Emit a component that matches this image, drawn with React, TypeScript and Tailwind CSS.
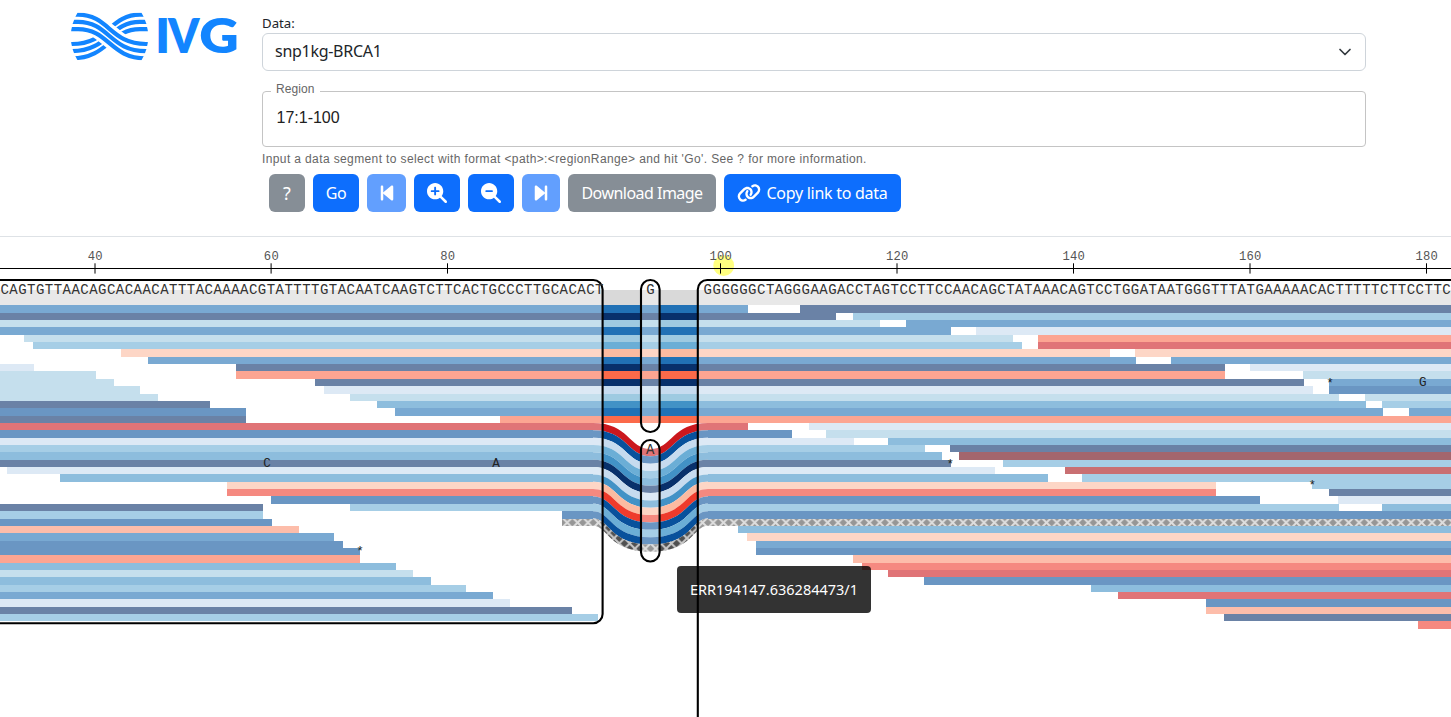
import React from "react";
import {
  FaBackwardStep,
  FaForwardStep,
  FaLink,
  FaMagnifyingGlassMinus,
  FaMagnifyingGlassPlus,
} from "react-icons/fa6";

const COLORS: Record<string, string> = {
  A: "#c6dbef",
  B: "#9ecae1",
  C: "#6baed6",
  D: "#4292c6",
  E: "#2171b5",
  F: "#08519c",
  G: "#08306b",
  h: "#fcbba1",
  i: "#fc9272",
  j: "#fb6a4a",
  k: "#ef3b2c",
  l: "#cb181d",
  m: "#a50f15",
  n: "#67000d",
  x: "url(#plaid)",
};

type Read = [string, number, number];
const END = 1460;

const ROWS: Read[][] = [
  [["E", 0, 748], ["G", 800, END]],
  [["G", 0, 836], ["C", 853, END]],
  [["B", 0, 880], ["E", 906, END]],
  [["E", 0, 951], ["A", 976, END]],
  [["B", 24, 1013], ["j", 1038, END]],
  [["C", 33, 1022], ["l", 1038, END]],
  [["h", 121, 1110], ["h", 1135, END]],
  [["E", 148, 1136], ["E", 1171, END]],
  [["A", 0, 34], ["G", 236, 1225], ["A", 1250, END]],
  [["B", 0, 96], ["j", 236, 1225], ["B", 1303, END]],
  [["B", 0, 114], ["G", 315, 1304], ["E", 1329, END]],
  [["B", 0, 140], ["A", 324, 1313], ["F", 1329, END]],
  [["B", 0, 158], ["B", 350, 1339], ["B", 1365, END]],
  [["G", 0, 210], ["D", 377, 1366], ["C", 1382, END]],
  [["F", 0, 246], ["E", 395, 1383], ["E", 1409, END]],
  [["G", 0, 246], ["j", 500, END]],
  [["l", 0, 748], ["A", 809, END]],
  [["F", 0, 792], ["B", 826, END]],
  [["A", 0, 854], ["D", 888, END]],
  [["C", 0, 925], ["G", 950, END]],
  [["D", 0, 942], ["n", 959, END]],
  [["G", 0, 951], ["C", 1003, END]],
  [["A", 7, 995], ["m", 1065, END]],
  [["D", 60, 1048], ["C", 1082, END]],
  [["h", 227, 1216], ["C", 1312, END]],
  [["k", 227, 1216], ["G", 1329, END]],
  [["F", 271, 1260], ["A", 1338, END]],
  [["G", 0, 263], ["C", 350, 1339], ["D", 1382, END]],
  [["C", 0, 263], ["F", 562, END]],
  [["F", 0, 272], ["x", 562, END]],
  [["i", 0, 299], ["D", 738, END]],
  [["E", 0, 334], ["h", 747, END]],
  [["F", 0, 343], ["E", 756, END]],
  [["F", 0, 360], ["F", 756, END]],
  [["j", 0, 360], ["i", 853, END]],
  [["D", 0, 396], ["k", 862, END]],
  [["B", 0, 413], ["l", 888, END]],
  [["D", 0, 431], ["F", 924, END]],
  [["C", 0, 466], ["D", 1091, END]],
  [["E", 0, 493], ["l", 1118, END]],
  [["A", 0, 510], ["F", 1206, END]],
  [["G", 0, 572], ["i", 1206, END]],
  [["C", 0, 598], ["G", 1224, END]],
  [["k", 1418, END]],
];

const TOP = 305.33;
const LANE = 7.351;
const FIRST_BENT = 16;
const LAST_BENT = 29;
const DIP = 26;
const BEND_LEFT = 593;
const BEND_RIGHT = 708;
const FLAT = 650.5;

const laneY = (row: number) => Math.round(TOP + LANE * row);
const bendX = (edge: number) => 629 - edge * 1.5;

function bentPath(row: number) {
  const n = row - FIRST_BENT;
  const y0 = TOP + LANE * row;
  const y1 = y0 + LANE;
  const a = bendX(n);
  const b = bendX(n + 1);
  const mirror = (x: number) => BEND_LEFT + BEND_RIGHT - x;
  return [
    `M${BEND_LEFT} ${y0}`,
    `C${a} ${y0} ${a} ${y0 + DIP} ${FLAT} ${y0 + DIP}`,
    `C${mirror(a)} ${y0 + DIP} ${mirror(a)} ${y0} ${BEND_RIGHT} ${y0}`,
    `V${y1}`,
    `C${mirror(b)} ${y1} ${mirror(b)} ${y1 + DIP} ${FLAT} ${y1 + DIP}`,
    `C${b} ${y1 + DIP} ${b} ${y1} ${BEND_LEFT} ${y1}`,
    "Z",
  ].join(" ");
}

function Reads() {
  const out: React.ReactNode[] = [];
  ROWS.forEach((reads, row) => {
    const y = laneY(row);
    const h = laneY(row + 1) - y;
    reads.forEach(([c, x0, x1]) => {
      const key = `${row}-${x0}`;
      const bent = row >= FIRST_BENT && row <= LAST_BENT && x0 < BEND_LEFT && x1 > BEND_RIGHT;
      if (bent) {
        out.push(
          <g key={key} fill={COLORS[c]}>
            <rect x={x0} y={y} width={BEND_LEFT - x0} height={h} />
            <path d={bentPath(row)} />
            <rect x={BEND_RIGHT} y={y} width={x1 - BEND_RIGHT} height={h} />
          </g>
        );
      } else {
        out.push(<rect key={key} x={x0} y={y} width={x1 - x0} height={h} fill={COLORS[c]} />);
      }
    });
  });
  return <g>{out}</g>;
}

const TICKS: [number, number][] = [
  [40, 95],
  [60, 271.1],
  [80, 447.5],
  [100, 720.5],
  [120, 897],
  [140, 1073.5],
  [160, 1250],
  [180, 1426.5],
];

const LETTERS: [string, number, number][] = [
  ["C", 267, 467],
  ["A", 496, 467],
  ["G", 1422.8, 386.4],
  ["*", 1330, 386.5],
  ["*", 950.3, 467.5],
  ["*", 360, 555.3],
  ["*", 1312.3, 489.3],
];

const LEFT_SEQ = "CAGTGTTAACAGCACAACATTTACAAAACGTATTTTGTACAATCAAGTCTTCACTGCCCTTGCACACT";
const RIGHT_SEQ =
  "GGGGGGCTAGGGAAGACCTAGTCCTTCCAACAGCTATAAACAGTCCTGGATAATGGGTTTATGAAAAACACTTTTTCTTCCTTCA";

function TubeMap() {
  return (
    <svg className="block" width="1451" height="480" viewBox="0 237 1451 480">
      <defs>
        <pattern id="plaid" x="739.1" y="517.4" width="10.42" height="10.42" patternUnits="userSpaceOnUse">
          <rect width="10.42" height="10.42" fill="#505050" />
          <path d="M-1 -1L11.42 11.42M11.42 -1L-1 11.42" stroke="#c9c9c9" strokeWidth="2" />
        </pattern>
      </defs>
      <circle cx="723.7" cy="265.7" r="10.4" fill="#ffff80" />
      <rect x="0" y="268" width="1451" height="1" fill="#000" />
      {TICKS.map(([n, x]) => (
        <g key={n}>
          <path d={`M${x} 263.3V273.6`} stroke="#000" strokeWidth="1" />
          <text
            x={x + 0.3}
            y="260"
            textAnchor="middle"
            fill="#555"
            className="font-['Liberation_Mono',monospace] text-[12.2px] tracking-[0.25px]"
          >
            {n}
          </text>
        </g>
      ))}
      <rect x="0" y="290" width="1451" height="15" fill="#d9d9d9" />
      <Reads />
      <g fill="#fff" fillOpacity="0.4" stroke="#000" strokeWidth="2.1">
        <rect x="-40" y="280" width="642.6" height="343.3" rx="9.4" />
        <rect x="641" y="280" width="18.6" height="152" rx="9.2" />
        <rect x="641" y="440" width="18.6" height="121.5" rx="9.2" />
        <rect x="697.8" y="280" width="900" height="500" rx="9.4" />
      </g>
      <g fill="#333" className="font-['Liberation_Mono',monospace] text-[14px]">
        <text x="0.5" y="294" textLength="603">{LEFT_SEQ}</text>
        <text x="703.6" y="294" textLength="756">{RIGHT_SEQ}</text>
        <text x="650.5" y="294" textAnchor="middle">G</text>
        <text x="650.3" y="453.5" textAnchor="middle">A</text>
      </g>
      <g fill="#222" className="font-['Liberation_Mono',monospace] text-[12.6px]">
        {LETTERS.map(([ch, x, y]) => (
          <text key={`${ch}${x}`} x={x} y={y} textAnchor="middle">
            {ch}
          </text>
        ))}
      </g>
    </svg>
  );
}

function Logo() {
  const offsets = [0, 7.2, 14.4];
  return (
    <svg className="block overflow-visible" width="180" height="72" viewBox="70 0 180 72">
      <defs>
        <clipPath id="barrel">
          <path d="M77.5 12.8H141.5Q148.2 24 148.2 36.5T141.5 60.2H77.5Q70.8 49 70.8 36.5T77.5 12.8Z" />
        </clipPath>
      </defs>
      <g clipPath="url(#barrel)" fill="none">
        <g stroke="#1285ff" strokeWidth="4.2">
          {offsets.map((o) => (
            <path key={o} d={`M66 ${44 + o}H72C108 ${44 + o} 110 ${14.7 + o} 140 ${14.7 + o}H153`} />
          ))}
        </g>
        <path d="M66 21.9H78C109 21.9 110 51.2 146 51.2H153" stroke="#fff" strokeWidth="22" />
        <g stroke="#1285ff" strokeWidth="4.2">
          {offsets.map((o) => (
            <path key={o} d={`M66 ${14.7 + o}H78C109 ${14.7 + o} 110 ${44 + o} 146 ${44 + o}H153`} />
          ))}
        </g>
      </g>
      <g fill="#1285ff" className="font-['Lato',sans-serif] text-[47.5px] font-extrabold">
        <text x="155.2" y="53.4">I</text>
        <text x="168" y="53.4" textLength="31.5" lengthAdjust="spacingAndGlyphs">V</text>
        <text x="199.2" y="53.4" textLength="39.5" lengthAdjust="spacingAndGlyphs">G</text>
      </g>
    </svg>
  );
}

const BTN =
  "flex h-[38px] shrink-0 items-center justify-center rounded-md leading-6 text-white whitespace-nowrap";

export default function App() {
  return (
    <div className="flex h-[717px] w-[1451px] flex-col overflow-hidden bg-white font-['Noto_Sans',sans-serif] text-[#212529]">
      <header className="flex h-[237px] shrink-0 border-b border-[#dee2e6]">
        <div className="w-[262px] shrink-0 pl-[70px]">
          <Logo />
        </div>
        <div className="flex w-[1104px] flex-col">
          <label className="mt-[13px] h-5 text-[13.2px] leading-5">Data:</label>
          <div className="flex h-[38px] items-center justify-between rounded-md border border-[#ced4da] pr-3 pl-3">
            <span className="pb-[2px] text-base tracking-[-0.28px]">snp1kg-BRCA1</span>
            <svg width="16" height="16" viewBox="0 0 16 16" fill="none" stroke="#343a40" strokeWidth="1.7" strokeLinecap="round" strokeLinejoin="round">
              <path d="m3 5.5 5 5 5-5" />
            </svg>
          </div>
          <fieldset className="mt-[9px] h-[67px] rounded border border-[#c4c4c4] pl-[8px] font-['Liberation_Sans',sans-serif]">
            <legend className="h-[22px] px-[5px] text-[12px] leading-[18px] tracking-[0.1px] text-[#666]">Region</legend>
            <div className="mt-[1px] pl-[5.5px] text-[16px] leading-[30px] text-[#212121]">17:1-100</div>
          </fieldset>
          <p className="mt-[2px] h-5 font-['Liberation_Sans',sans-serif] text-[12px] leading-5 tracking-[0.38px] text-[#666]">
            {"Input a data segment to select with format <path>:<regionRange> and hit 'Go'. See ? for more information."}
          </p>
          <div className="mt-[5px] flex gap-2 pl-[7px] text-base">
            <button className={`${BTN} w-9 bg-[#868e96] text-[18px]`}>?</button>
            <button className={`${BTN} w-[46px] bg-[#0d6efd] tracking-[-0.3px]`}>Go</button>
            <button className={`${BTN} w-[39px] bg-[#629ffe]`}>
              <FaBackwardStep size={20} />
            </button>
            <button className={`${BTN} w-[46px] bg-[#0d6efd]`}>
              <FaMagnifyingGlassPlus size={20} />
            </button>
            <button className={`${BTN} w-[46px] bg-[#0d6efd]`}>
              <FaMagnifyingGlassMinus size={20} />
            </button>
            <button className={`${BTN} w-[38px] bg-[#629ffe]`}>
              <FaForwardStep size={20} />
            </button>
            <button className={`${BTN} w-[148px] bg-[#868e96] tracking-[-0.52px]`}>Download Image</button>
            <button className={`${BTN} w-[177px] gap-[5px] bg-[#0d6efd] tracking-[-0.27px]`}>
              <FaLink size={24} />
              Copy link to data
            </button>
          </div>
        </div>
      </header>
      <main className="relative">
        <TubeMap />
        <div className="absolute top-[329px] left-[677px] flex h-[47px] w-[194px] items-center justify-center rounded bg-black/80 text-[14.5px] text-white">
          ERR194147.636284473/1
        </div>
      </main>
    </div>
  );
}
